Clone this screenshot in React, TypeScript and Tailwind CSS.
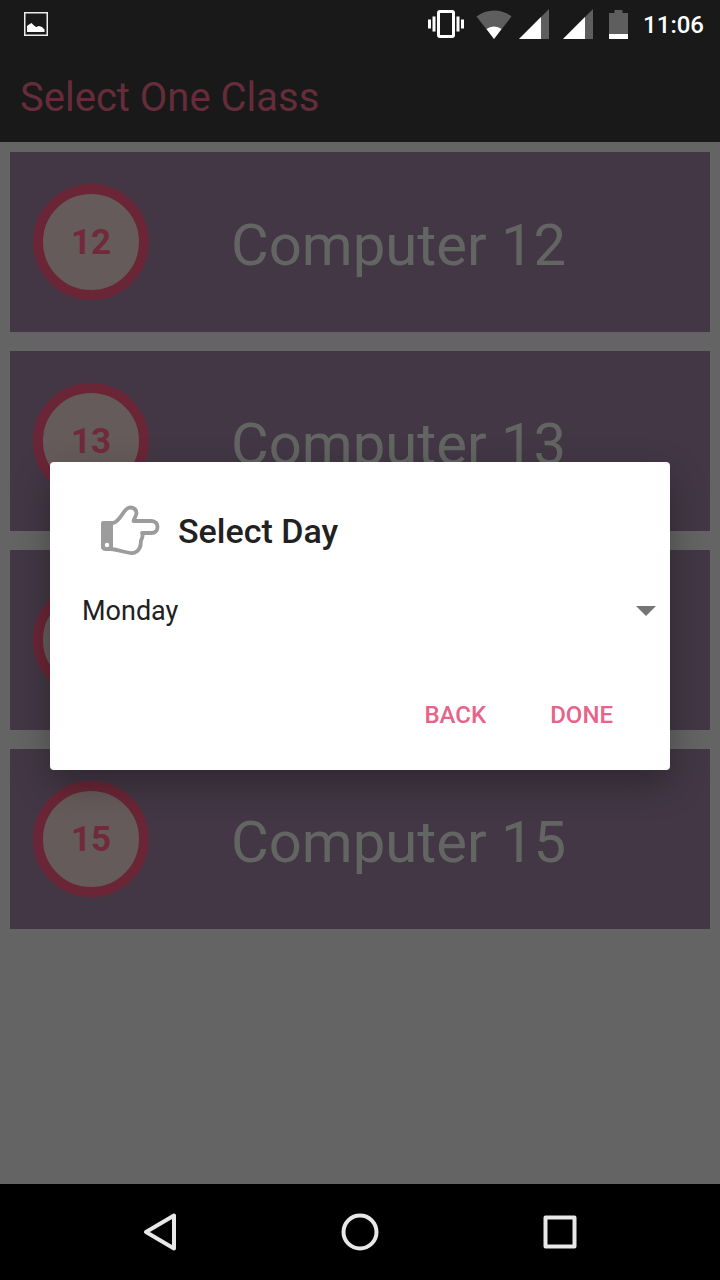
import { useState } from "react";

const classes = [
  { id: 12, name: "Computer 12" },
  { id: 13, name: "Computer 13" },
  { id: 14, name: "Computer 14" },
  { id: 15, name: "Computer 15" },
];

const days = ["Monday", "Tuesday", "Wednesday", "Thursday", "Friday", "Saturday"];

function SignalIcon() {
  return (
    <svg viewBox="0 0 30 30" className="h-[30px] w-[30px]" aria-hidden="true">
      <path d="M30 0V30H0Z" fill="#5e5e5e" />
      <path d="M22 8V30H0Z" fill="#fff" />
    </svg>
  );
}

function StatusBar() {
  return (
    <div className="flex h-12 items-center bg-[#191919] pr-4 pl-6 text-white">
      <svg viewBox="0 0 24 24" className="h-6 w-6" aria-hidden="true">
        <rect x="0.75" y="0.75" width="22.5" height="22.5" fill="none" stroke="#ececec" strokeWidth="1.5" />
        <path d="M3 20V14L5 12.500L7.500 11L10 13.500L12 15L15 14L18 15L20.500 17.500V20Z" fill="#fff" />
      </svg>
      <div className="ml-auto flex items-center">
        <svg viewBox="0 0 36 28" className="h-7 w-9" aria-hidden="true">
          <rect x="10.500" y="1.500" width="15" height="25" rx="1.500" fill="none" stroke="#fff" strokeWidth="3" />
          <path d="M0 9.500h3v9H0zM4.500 6.500h3v15h-3zM28.500 6.500h3v15h-3zM33 9.500h3v9h-3z" fill="#fff" />
        </svg>
        <svg viewBox="0 0 36 29" className="ml-3 h-[29px] w-9" aria-hidden="true">
          <path d="M18 29L0.500 6.500Q8 0.500 18 0.500T35.500 6.500Z" fill="#5e5e5e" />
          <path d="M18 29L10.500 19Q13.500 16.500 18 16.500T25.500 19Z" fill="#fff" />
        </svg>
        <div className="ml-[7px] flex gap-[14px]">
          <SignalIcon />
          <SignalIcon />
        </div>
        <svg viewBox="0 0 19 29" className="ml-4 h-[29px] w-[19px]" aria-hidden="true">
          <path d="M5.500 0h8v3H19v26H0V3h5.500z" fill="#5e5e5e" />
          <path d="M0 24h19v5H0z" fill="#fff" />
        </svg>
        <span className="ml-[15px] pt-[2px] text-2xl leading-8 font-medium">11:06</span>
      </div>
    </div>
  );
}

function ClassRow({ id, name }: { id: number; name: string }) {
  return (
    <li>
      <button type="button" className="flex h-[180px] w-full items-center bg-[#433745] pl-[23px] text-left">
        <span className="flex h-[116px] w-[116px] shrink-0 items-center justify-center rounded-full border-10 border-[#6a2636] bg-[#655b5a] pt-[2px] text-[35px] font-bold text-[#712a3c]">
          {id}
        </span>
        <span className="pt-[6px] pl-[82px] text-[58px] leading-[60px] text-[#636563]">{name}</span>
      </button>
    </li>
  );
}

function PointingHand() {
  return (
    <svg viewBox="0 0 60 52" className="h-[52px] w-[60px]" aria-hidden="true">
      <path
        d="M3 18H13C19 16.500 21 10 26 4.500C30 0.500 36.500 3 36.500 8C36.500 11 34 13 33.500 16H51.500C59.500 16 59.500 28 51.500 28H42C43.500 31 42.500 33 41 35.500C41 41 39 46 35 47.500C29 50 20 44.500 11 44H5Q3 44 3 42Z"
        fill="#fff"
        stroke="#9c9c9c"
        strokeWidth="3.800"
        strokeLinejoin="round"
      />
      <path d="M1 20Q1 17 4 17H13V44H4Q1 44 1 42Z" fill="#9c9c9c" />
      <circle cx="7" cy="40" r="2.200" fill="#fff" />
    </svg>
  );
}

function DayDialog() {
  const [day, setDay] = useState("Monday");
  return (
    <div className="absolute inset-0 flex items-center px-[50px] pt-12 pb-24">
      <form
        role="dialog"
        aria-labelledby="day-title"
        className="w-full rounded-[4px] bg-white pt-[41px] pb-[19px] shadow-[0_14px_36px_0_rgba(0,0,0,0.3)]"
        onSubmit={(e) => e.preventDefault()}
      >
        <div className="flex items-center gap-[18px] pl-[50px]">
          <PointingHand />
          <label id="day-title" htmlFor="day" className="text-[34px] leading-[56px] font-medium text-[#212121]">
            Select Day
          </label>
        </div>
        <div className="relative mt-6 flex items-center">
          <select
            id="day"
            value={day}
            onChange={(e) => setDay(e.target.value)}
            className="h-14 w-full appearance-none bg-transparent pr-10 pl-8 text-[27px] text-[#212121]"
          >
            {days.map((d) => (
              <option key={d}>{d}</option>
            ))}
          </select>
          <svg viewBox="0 0 20 10" className="pointer-events-none absolute right-[14px] h-[10px] w-5" aria-hidden="true">
            <path d="M0 0H20L10 10Z" fill="#757575" />
          </svg>
        </div>
        <div className="mt-10 flex justify-end gap-8 pr-[41px]">
          <button type="button" className="h-[72px] px-4 text-2xl font-medium text-[#e8638a]">
            BACK
          </button>
          <button type="submit" className="h-[72px] px-4 text-2xl font-medium text-[#e8638a]">
            DONE
          </button>
        </div>
      </form>
    </div>
  );
}

function NavBar() {
  return (
    <nav className="flex h-24 items-center justify-center gap-40 bg-black">
      <button type="button" aria-label="Back">
        <svg viewBox="0 0 40 40" className="h-10 w-10" fill="none" stroke="#e8e8e8" strokeWidth="4" strokeLinejoin="round">
          <path d="M34 3.500V36.500L6 20Z" />
        </svg>
      </button>
      <button type="button" aria-label="Home">
        <svg viewBox="0 0 40 40" className="h-10 w-10" fill="none" stroke="#e8e8e8" strokeWidth="4">
          <circle cx="20" cy="20" r="16.500" />
        </svg>
      </button>
      <button type="button" aria-label="Recent apps">
        <svg viewBox="0 0 40 40" className="h-10 w-10" fill="none" stroke="#e8e8e8" strokeWidth="4" strokeLinejoin="round">
          <path d="M5.500 5.500H34.500V34.500H5.500Z" />
        </svg>
      </button>
    </nav>
  );
}

export default function App() {
  return (
    <div className="relative flex min-h-screen flex-col bg-[#646464] font-['Roboto',sans-serif]">
      <StatusBar />
      <header className="flex h-[94px] items-center bg-[#191919] px-5 pt-[6px]">
        <h1 className="text-[40px] leading-[48px] text-[#652c3a]">Select One Class</h1>
      </header>
      <main className="flex-1 p-[10px]">
        <ul className="flex flex-col gap-[19px]">
          {classes.map((c) => (
            <ClassRow key={c.id} id={c.id} name={c.name} />
          ))}
        </ul>
      </main>
      <NavBar />
      <DayDialog />
    </div>
  );
}
